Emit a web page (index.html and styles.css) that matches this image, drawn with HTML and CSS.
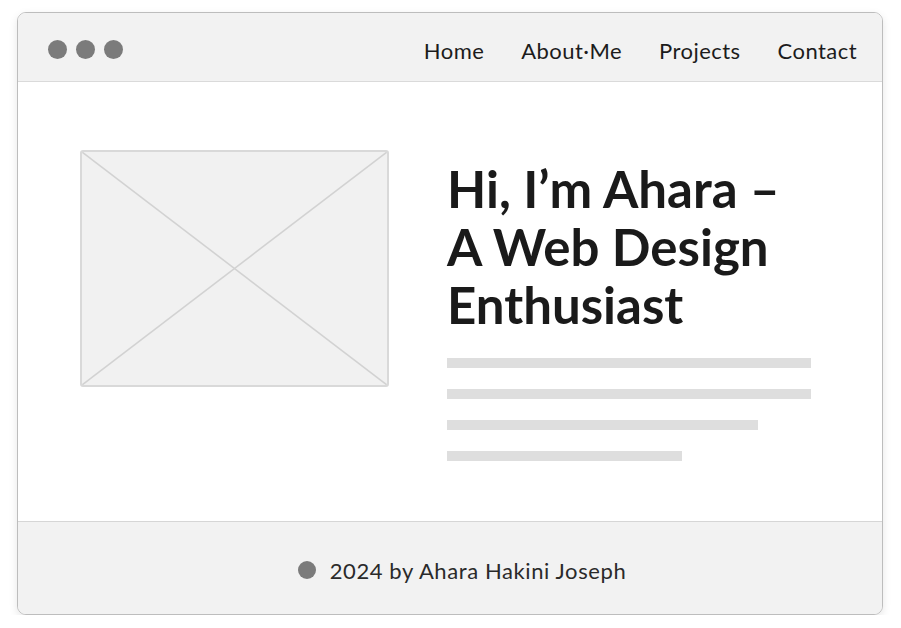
FILE: index.html
```html
<!DOCTYPE html>
<html lang="en">
<head>
<meta charset="utf-8">
<title>Ahara</title>
<link rel="stylesheet" href="styles.css">
</head>
<body>
<div class="window">
  <header class="topbar">
    <div class="dots"><span class="dot"></span><span class="dot"></span><span class="dot"></span></div>
    <nav class="nav">
      <a href="#">Home</a>
      <a href="#">About·Me</a>
      <a href="#">Projects</a>
      <a href="#">Contact</a>
    </nav>
  </header>
  <main class="hero">
    <div class="placeholder">
      <svg viewBox="0 0 309 236" preserveAspectRatio="none" width="100%" height="100%">
        <line x1="0" y1="0" x2="309" y2="236" stroke="#d2d2d2" stroke-width="1.6"/>
        <line x1="309" y1="0" x2="0" y2="236" stroke="#d2d2d2" stroke-width="1.6"/>
      </svg>
    </div>
    <div class="intro">
      <h1 class="title">Hi, I’m Ahara –<br>A Web Design<br>Enthusiast</h1>
      <div class="lines">
        <span class="bar bar-full"></span>
        <span class="bar bar-full"></span>
        <span class="bar bar-mid"></span>
        <span class="bar bar-short"></span>
      </div>
    </div>
  </main>
  <footer class="footer">
    <span class="fdot"></span>
    <span class="ftext">2024 by Ahara Hakini Joseph</span>
  </footer>
</div>
</body>
</html>
```
FILE: styles.css
```css
* { box-sizing: border-box; }
html, body { margin: 0; padding: 0; background: #ffffff; }
body {
  font-family: Lato, "Noto Sans", sans-serif;
  color: #1c1c1c;
  padding: 12px 0 0 17px;
}
.window {
  width: 866px;
  height: 603px;
  border: 1px solid #bdbdbd;
  border-radius: 9px;
  overflow: hidden;
  background: #fff;
  display: flex;
  flex-direction: column;
  box-shadow: 0 3px 8px rgba(0,0,0,0.10);
}
.topbar {
  height: 69px;
  flex: none;
  background: #f2f2f2;
  border-bottom: 1px solid #dadada;
  display: flex;
  align-items: center;
  justify-content: space-between;
  padding: 4px 25px 0 30px;
}
.dots { display: flex; gap: 9px; margin-top: 1px; }
.dot {
  width: 19px; height: 19px; border-radius: 50%;
  background: #7b7b7b;
}
.nav { display: flex; gap: 37px; margin-top: 2px; }
.nav a {
  color: #1c1c1c;
  text-decoration: none;
  font-size: 22px;
  letter-spacing: 0.45px;
}
.hero {
  flex: 1;
  display: flex;
  align-items: flex-start;
  padding: 68px 0 0 62px;
  gap: 58px;
}
.placeholder {
  width: 309px;
  height: 237px;
  flex: none;
  background: #f1f1f1;
  border: 2px solid #d9d9d9;
  border-radius: 3px;
  overflow: hidden;
}
.placeholder svg { display: block; }
.intro { padding-top: 10px; width: 364px; }
.title {
  margin: 0;
  font-size: 51px;
  line-height: 58px;
  font-weight: 700;
  color: #1a1a1a;
  white-space: nowrap;
}
.lines {
  margin-top: 24px;
  display: flex;
  flex-direction: column;
  gap: 21px;
}
.bar { display: block; height: 10px; background: #dedede; }
.bar-full { width: 364px; }
.bar-mid { width: 311px; }
.bar-short { width: 235px; }
.footer {
  height: 93px;
  flex: none;
  background: #f2f2f2;
  border-top: 1px solid #d6d6d6;
  display: flex;
  align-items: center;
  justify-content: center;
  gap: 14px;
  padding: 4px 0 0 24px;
}
.fdot { width: 18px; height: 18px; border-radius: 50%; background: #7b7b7b; }
.ftext { font-size: 22px; color: #2a2a2a; letter-spacing: 0.6px; }
```
